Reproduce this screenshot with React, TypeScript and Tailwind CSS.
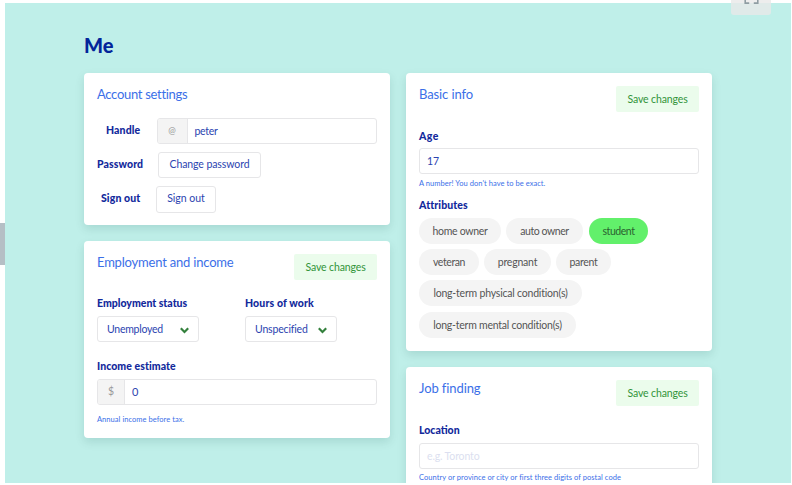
import type { ReactNode } from "react";

function Card({ className, children }: { className: string; children: ReactNode }) {
  return (
    <section className={`w-[306px] rounded-[4px] bg-white px-[13px] shadow-[0_4px_10px_rgba(10,70,60,0.13)] ${className}`}>
      {children}
    </section>
  );
}

function Heading({ children, className = "", save = true }: { children: ReactNode; className?: string; save?: boolean }) {
  return (
    <div className="flex h-[26px] items-start justify-between">
      <h2 className={`-mt-px text-[13px] leading-[18px] text-[#3b6fe8] ${className}`}>{children}</h2>
      {save && (
        <button className="h-[26px] w-[83px] rounded-[2px] bg-[#ebfcec] pt-[2px] text-[10.5px] tracking-[-0.12px] text-[#32943a]">Save changes</button>
      )}
    </div>
  );
}

function Label({ children, className = "" }: { children: ReactNode; className?: string }) {
  return <label className={`block text-[10.5px] leading-[16px] font-black text-[#12299c] ${className}`}>{children}</label>;
}

function Hint({ children, className = "" }: { children: ReactNode; className?: string }) {
  return <p className={`text-[7.5px] leading-[10px] tracking-[0.05px] text-[#3b6fe8] ${className}`}>{children}</p>;
}

function Pill({ children, className }: { children: ReactNode; className: string }) {
  return <button className={`h-[26px] rounded-full pt-[2px] text-[10.5px] whitespace-nowrap ${className}`}>{children}</button>;
}

function Chevron() {
  return (
    <svg className="h-[7px] w-[9px]" viewBox="0 0 9 7" fill="none" stroke="#33803c" strokeWidth="2.2">
      <path d="M.8 1.3 4.5 5 8.2 1.3" />
    </svg>
  );
}

const box = "rounded-[3px] border border-[#e6e6e8] text-[10.5px] text-[#2b44b0]";

export default function App() {
  return (
    <div className="relative h-[485px] w-[792px] overflow-hidden bg-white pt-[3px] pl-[5px] font-['Lato',sans-serif]">
      <main className="h-[480px] w-[786px] overflow-hidden bg-[#bfefe9] pt-[30px] pl-[79px]">
        <h1 className="h-[39.5px] text-[20px] leading-[25px] font-black text-[#03259a]">Me</h1>
        <div className="flex items-start gap-4">
          <div className="flex flex-col gap-4">
            <Card className="h-[152px] pt-[13px]">
              <Heading save={false} className="tracking-[-0.3px]">Account settings</Heading>
              <div className="mt-[6px] flex">
                <Label className="w-[59.5px] pt-[4.5px] pl-[9px] tracking-[0.1px]">Handle</Label>
                <div className={`flex h-[26px] flex-1 overflow-hidden ${box}`}>
                  <span className="flex w-[30px] items-center justify-center border-r border-[#e6e6e8] bg-[#f4f4f4] text-[9px] text-[#999]">@</span>
                  <span className="pt-[4.5px] pl-[7px] leading-[16px] tracking-[-0.3px]">peter</span>
                </div>
              </div>
              <div className="mt-[8px] flex">
                <Label className="w-[61px] pt-[4px] tracking-[0.1px]">Password</Label>
                <button className={`h-[26px] w-[103px] pt-px tracking-[-0.1px] ${box}`}>Change password</button>
              </div>
              <div className="mt-[8px] flex">
                <Label className="w-[59px] pt-[4px] pl-[4px] tracking-[0.1px]">Sign out</Label>
                <button className={`h-[27px] w-[60px] ${box}`}>Sign out</button>
              </div>
            </Card>
            <Card className="h-[197px] pt-[13px]">
              <Heading className="tracking-[-0.2px]">Employment and income</Heading>
              <div className="mt-[15.5px] flex">
                <div className="w-[148px]">
                  <Label>Employment status</Label>
                  <div className={`mt-[5px] flex h-[26px] w-[102px] items-center justify-between pt-[2px] pr-[9px] pl-[9px] tracking-[-0.25px] ${box}`}>
                    Unemployed
                    <Chevron />
                  </div>
                </div>
                <div>
                  <Label className="tracking-[0.15px]">Hours of work</Label>
                  <div className={`mt-[5px] flex h-[26px] w-[92px] items-center justify-between pt-[2px] pr-[9px] pl-[9px] tracking-[-0.17px] ${box}`}>
                    Unspecified
                    <Chevron />
                  </div>
                </div>
              </div>
              <Label className="mt-[16px] tracking-[0.06px]">Income estimate</Label>
              <div className={`mt-[5px] flex h-[26px] overflow-hidden ${box}`}>
                <span className="flex w-[27px] items-center justify-center border-r border-[#e6e6e8] bg-[#f4f4f4] text-[#999]">$</span>
                <span className="pt-[4px] pl-[7px] text-[11px] leading-[16px]">0</span>
              </div>
              <Hint className="mt-[9.5px]">Annual income before tax.</Hint>
            </Card>
          </div>
          <div className="flex flex-col gap-4">
            <Card className="h-[278.5px] pt-[13.5px]">
              <Heading className="tracking-[-0.1px]">Basic info</Heading>
              <Label className="mt-[16px] tracking-[0.5px]">Age</Label>
              <div className={`mt-[4px] h-[26px] pt-[4px] pl-[7px] leading-[16px] ${box}`}>17</div>
              <Hint className="mt-[4.5px]">A number! You don't have to be exact.</Hint>
              <Label className="mt-[8px] tracking-[0.1px]">Attributes</Label>
              <div className="mt-[5px] flex flex-wrap gap-x-[5px] gap-y-[5.4px] text-[#555]">
                <Pill className="w-[82px] bg-[#f4f4f4] tracking-[-0.3px]">home owner</Pill>
                <Pill className="w-[77px] bg-[#f4f4f4] tracking-[-0.45px]">auto owner</Pill>
                <Pill className="ml-px w-[59px] bg-[#62f06b] tracking-[-0.45px] text-[#2b6130]">student</Pill>
                <Pill className="w-[60px] bg-[#f4f4f4] tracking-[-0.4px]">veteran</Pill>
                <Pill className="w-[67px] bg-[#f4f4f4] tracking-[-0.2px]">pregnant</Pill>
                <Pill className="w-[55px] bg-[#f4f4f4] tracking-[-0.3px]">parent</Pill>
                <Pill className="mr-10 w-[163px] bg-[#f4f4f4] tracking-[-0.2px]">long-term physical condition(s)</Pill>
                <Pill className="w-[157px] bg-[#f4f4f4] tracking-[-0.23px]">long-term mental condition(s)</Pill>
              </div>
            </Card>
            <Card className="h-[170px] pt-[13px]">
              <Heading className="tracking-[-0.1px]">Job finding</Heading>
              <Label className="mt-[16px]">Location</Label>
              <div className={`mt-[4.5px] h-[26px] pt-[4px] pl-[7px] leading-[16px] tracking-[-0.15px] ${box}`}>
                <span className="text-[#dcdff0]">e.g. Toronto</span>
              </div>
              <Hint className="mt-[4px]">Country or province or city or first three digits of postal code</Hint>
            </Card>
          </div>
        </div>
      </main>
      <div className="absolute top-[223px] left-0 h-[42px] w-[5px] bg-[#b5bfc5]" />
      <div className="absolute top-0 left-[731px] flex h-[15px] w-[40px] justify-center overflow-hidden rounded-b-[3px] bg-[#e8e8e8]/80">
        <svg className="h-[4px] w-[15px]" viewBox="0 0 15 4" fill="none" stroke="#8f9da3" strokeWidth="1.6">
          <path d="M1.2 0v3.1h4M13.8 0v3.1h-4" />
        </svg>
      </div>
    </div>
  );
}
